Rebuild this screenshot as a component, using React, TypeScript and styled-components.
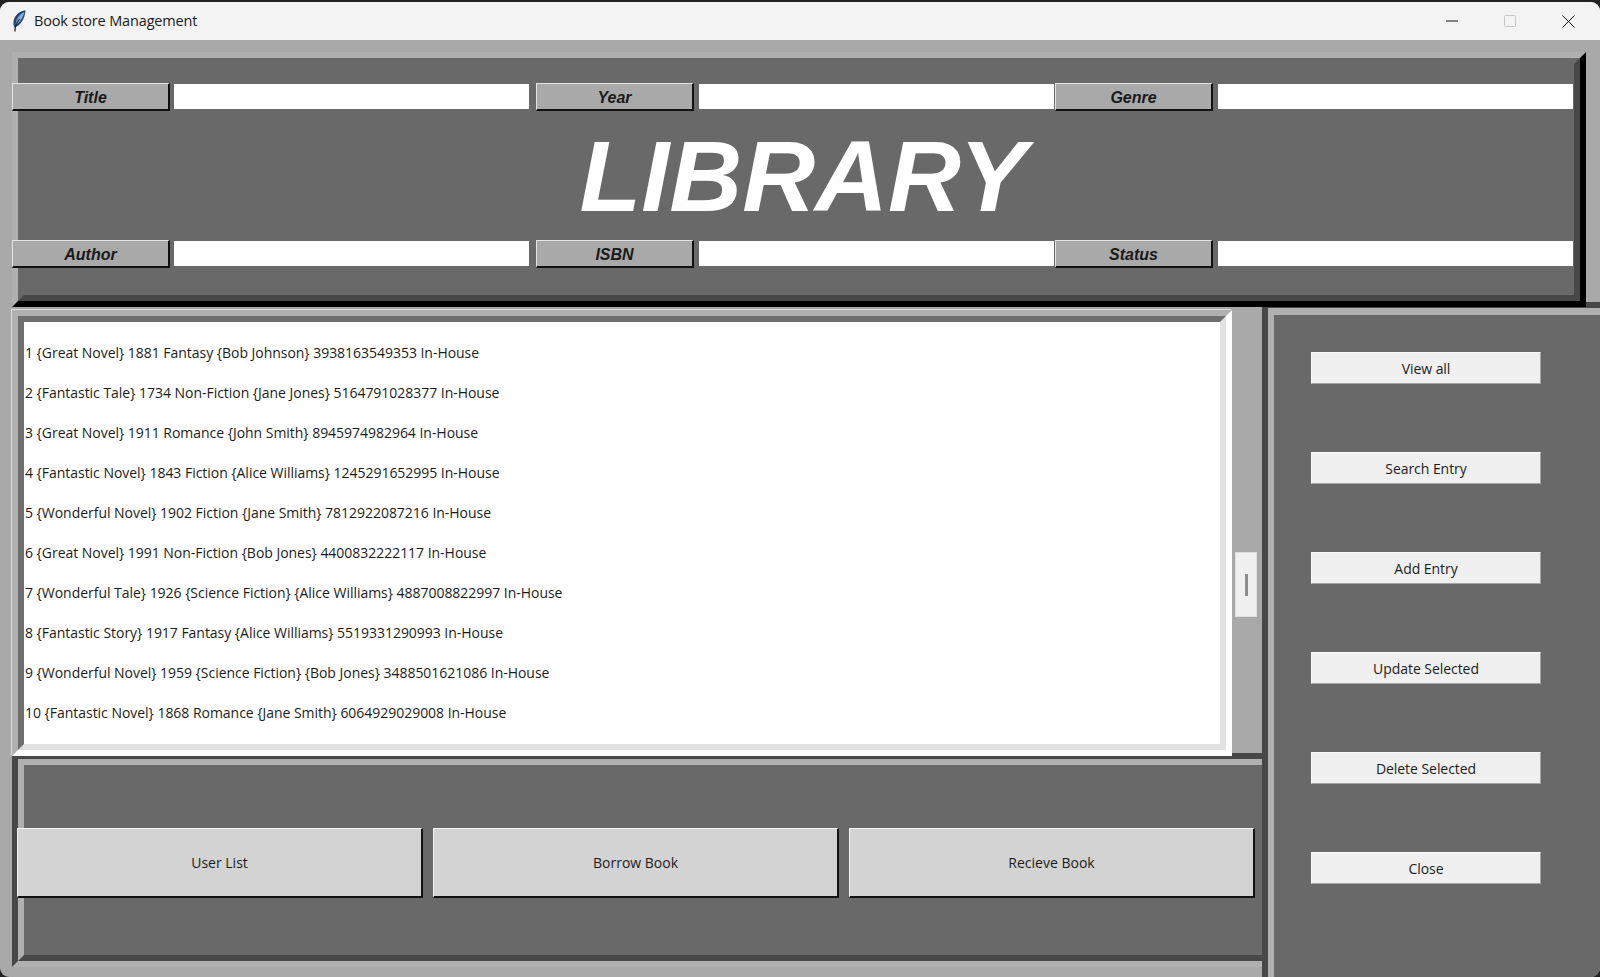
import React from "react";
import styled, { createGlobalStyle } from "styled-components";

const Global = createGlobalStyle`
  html, body { margin: 0; padding: 0; height: 100%; background: #222; overflow: hidden; }
  #root { height: 100%; }
  * { box-sizing: border-box; }
`;

const UI = `"Open Sans", "Noto Sans", "Liberation Sans", sans-serif`;
const ARIAL = `"Liberation Sans", Arial, sans-serif`;

const Window = styled.div`
  height: 977px;
  padding-top: 2px;
  background: #222;
`;
const Shell = styled.div`
  height: 975px;
  border-radius: 9px;
  overflow: hidden;
  display: flex;
  flex-direction: column;
  background: #a9a9a9;
`;
const TitleBar = styled.header`
  flex: 0 0 38px;
  display: flex;
  align-items: center;
  padding-left: 12px;
  background: #f3f3f3;
  font: 14.5px/1 ${UI};
  color: #1a1a1a;
`;
const TitleText = styled.span`
  margin: 0 0 0 7px;
  letter-spacing: -0.15px;
`;
const Controls = styled.div`
  margin: 0 3px 0 auto;
  display: flex;
  height: 100%;
`;
const ControlBox = styled.div`
  width: 58px;
  display: flex;
  align-items: center;
  justify-content: center;
`;
const Main = styled.main`
  flex: 1;
  min-height: 0;
  display: flex;
  flex-direction: column;
`;
const FrameOuter = styled.section`
  position: relative;
  z-index: 2;
  height: 255px;
  margin: 12px 14px 0 12px;
  border: 6px solid;
  border-color: #b0b0b0 #000 #000 #b0b0b0;
`;
const FrameInner = styled.div`
  height: 100%;
  border: 6px solid;
  border-color: #696969 #484848 #484848 #696969;
  background: #696969;
`;
const FieldGrid = styled.div`
  margin: 19px 0 0 -12px;
  display: grid;
  grid-template-columns: 162px 362px 163px 356px 163px 355px;
  grid-template-rows: 28px 129px 28px;
  align-items: start;
`;
const FieldLabel = styled.div`
  width: 158px;
  height: 28px;
  padding: 2px 0 0 0;
  display: flex;
  align-items: center;
  justify-content: center;
  background: #a9a9a9;
  border: 1px solid;
  border-width: 1px 2px 2px 1px;
  border-color: #e4e4e4 #111 #111 #e4e4e4;
  font: italic bold 16px ${ARIAL};
  color: #1a1a1a;
`;
const FieldEntry = styled.div`
  width: 355px;
  height: 25px;
  margin-top: 1px;
  background: #fff;
`;
const Heading = styled.h1`
  grid-column: 1 / -1;
  margin: 0;
  height: 129px;
  padding: 2px 0 0 21px;
  display: flex;
  align-items: center;
  justify-content: center;
  font: italic bold 101px ${ARIAL};
  color: #fff;
`;
const Lower = styled.div`
  flex: 1;
  min-height: 0;
  margin-top: -5px;
  display: flex;
`;
const LeftColumn = styled.div`
  flex: 0 0 1262px;
  min-width: 0;
  display: flex;
  flex-direction: column;
`;
const ListRow = styled.div`
  position: relative;
  z-index: 1;
  display: flex;
  margin-left: 12px;
  padding-top: 8px;
`;
const ListOuter = styled.div`
  flex: 0 0 1220px;
  height: 446px;
  border: 6px solid;
  border-color: #b0b0b0 #fff #fff #b0b0b0;
  box-shadow: -1px -1px 0 #dcdcdc;
`;
const ListInner = styled.div`
  height: 100%;
  border: 6px solid;
  border-color: #6e6e6e #e2e2e2 #e2e2e2 #6e6e6e;
  background: #fff;
  padding: 11px 0 0 1px;
`;
const ListRowText = styled.div`
  height: 40px;
  font: 14px/40px ${UI};
  letter-spacing: -0.03px;
  color: #1c1c1c;
  white-space: nowrap;
`;
const ScrollTrack = styled.div`
  flex: 1;
  padding: 242px 0 0 3px;
`;
const ScrollThumb = styled.div`
  width: 22px;
  height: 65px;
  display: flex;
  align-items: center;
  justify-content: center;
  background: #f0f0f0;
  border: 1px solid #dedede;
`;
const ThumbGrip = styled.div`
  width: 3px;
  height: 22px;
  margin-top: 1px;
  background: #8e8e8e;
`;
const ActionOuter = styled.section`
  height: 214px;
  margin: -3px -12px 0 12px;
  border: 6px solid;
  border-color: #484848 #b0b0b0 #b0b0b0 #484848;
`;
const ActionInner = styled.div`
  height: 100%;
  border: 6px solid;
  border-color: #b0b0b0 #484848 #484848 #b0b0b0;
  background: #696969;
  padding-top: 63px;
`;
const ActionRow = styled.div`
  display: flex;
  gap: 10px;
  margin-left: -7px;
`;
const BigButton = styled.button`
  flex: 0 0 406px;
  height: 70px;
  padding: 0;
  background: #d3d3d3;
  border: solid;
  border-width: 1px 2px 2px 1px;
  border-color: #f4f4f4 #111 #111 #f4f4f4;
  font: 14px ${UI};
  letter-spacing: 0;
  color: #1c1c1c;
`;
const SidePanelOuter = styled.aside`
  position: relative;
  z-index: 1;
  flex: 1;
  border: solid #484848;
  border-width: 6px 0 0 6px;
`;
const SidePanelInner = styled.div`
  height: 100%;
  border: solid #b0b0b0;
  border-width: 7px 0 0 6px;
  background: #696969;
  padding: 37px 0 0 37px;
  display: flex;
  flex-direction: column;
  gap: 68px;
`;
const SideButton = styled.button`
  width: 230px;
  height: 32px;
  padding: 0;
  background: #f0f0f0;
  border: 1px solid;
  border-color: #fafafa #a4a4a4 #a4a4a4 #fafafa;
  font: 14px ${UI};
  letter-spacing: -0.05px;
  color: #1c1c1c;
`;

const Feather = () => (
  <svg width="15" height="22" viewBox="0 0 15 22">
    <path d="M13.5 .3C7.5 1 2.5 5.5 1.5 11.5c-.3 2.2.1 4.4 1 6 6-1.5 10.5-9 11-17.2z" fill="#24406f" />
    <path d="M12.4 2C8.5 3.5 4.8 7.5 3.7 13c-.1 1 0 1.6.1 2.2C8 12.5 11.4 7 12.4 2z" fill="#86abdc" />
    <path d="M3 21.5c-.3-3 1-8 4.6-12.5" stroke="#1d2433" strokeWidth="1.2" fill="none" />
  </svg>
);

const rows = [
  "1 {Great Novel} 1881 Fantasy {Bob Johnson} 3938163549353 In-House",
  "2 {Fantastic Tale} 1734 Non-Fiction {Jane Jones} 5164791028377 In-House",
  "3 {Great Novel} 1911 Romance {John Smith} 8945974982964 In-House",
  "4 {Fantastic Novel} 1843 Fiction {Alice Williams} 1245291652995 In-House",
  "5 {Wonderful Novel} 1902 Fiction {Jane Smith} 7812922087216 In-House",
  "6 {Great Novel} 1991 Non-Fiction {Bob Jones} 4400832222117 In-House",
  "7 {Wonderful Tale} 1926 {Science Fiction} {Alice Williams} 4887008822997 In-House",
  "8 {Fantastic Story} 1917 Fantasy {Alice Williams} 5519331290993 In-House",
  "9 {Wonderful Novel} 1959 {Science Fiction} {Bob Jones} 3488501621086 In-House",
  "10 {Fantastic Novel} 1868 Romance {Jane Smith} 6064929029008 In-House",
];

const topFields = ["Title", "Year", "Genre"];
const bottomFields = ["Author", "ISBN", "Status"];
const sideActions = ["View all", "Search Entry", "Add Entry", "Update Selected", "Delete Selected", "Close"];
const mainActions = ["User List", "Borrow Book", "Recieve Book"];

export default function App() {
  return (
    <>
      <Global />
      <Window>
        <Shell>
          <TitleBar>
            <Feather />
            <TitleText>Book store Management</TitleText>
            <Controls>
              <ControlBox>
                <svg width="12" height="12" viewBox="0 0 12 12">
                  <path d="M0 6h12" stroke="#111" strokeWidth="1" />
                </svg>
              </ControlBox>
              <ControlBox>
                <svg width="12" height="12" viewBox="0 0 12 12">
                  <rect x=".5" y=".5" width="11" height="11" rx="1" fill="none" stroke="#c6c6c6" />
                </svg>
              </ControlBox>
              <ControlBox>
                <svg width="13" height="13" viewBox="0 0 13 13">
                  <path d="M.5.5l12 12M12.5.5l-12 12" stroke="#111" strokeWidth="1" />
                </svg>
              </ControlBox>
            </Controls>
          </TitleBar>
          <Main>
            <FrameOuter>
              <FrameInner>
                <FieldGrid>
                  {topFields.map((f) => (
                    <React.Fragment key={f}>
                      <FieldLabel>{f}</FieldLabel>
                      <FieldEntry />
                    </React.Fragment>
                  ))}
                  <Heading>LIBRARY</Heading>
                  {bottomFields.map((f) => (
                    <React.Fragment key={f}>
                      <FieldLabel>{f}</FieldLabel>
                      <FieldEntry />
                    </React.Fragment>
                  ))}
                </FieldGrid>
              </FrameInner>
            </FrameOuter>
            <Lower>
              <LeftColumn>
                <ListRow>
                  <ListOuter>
                    <ListInner>
                      {rows.map((r) => (
                        <ListRowText key={r}>{r}</ListRowText>
                      ))}
                    </ListInner>
                  </ListOuter>
                  <ScrollTrack>
                    <ScrollThumb>
                      <ThumbGrip />
                    </ScrollThumb>
                  </ScrollTrack>
                </ListRow>
                <ActionOuter>
                  <ActionInner>
                    <ActionRow>
                      {mainActions.map((a) => (
                        <BigButton key={a}>{a}</BigButton>
                      ))}
                    </ActionRow>
                  </ActionInner>
                </ActionOuter>
              </LeftColumn>
              <SidePanelOuter>
                <SidePanelInner>
                  {sideActions.map((a) => (
                    <SideButton key={a}>{a}</SideButton>
                  ))}
                </SidePanelInner>
              </SidePanelOuter>
            </Lower>
          </Main>
        </Shell>
      </Window>
    </>
  );
}
